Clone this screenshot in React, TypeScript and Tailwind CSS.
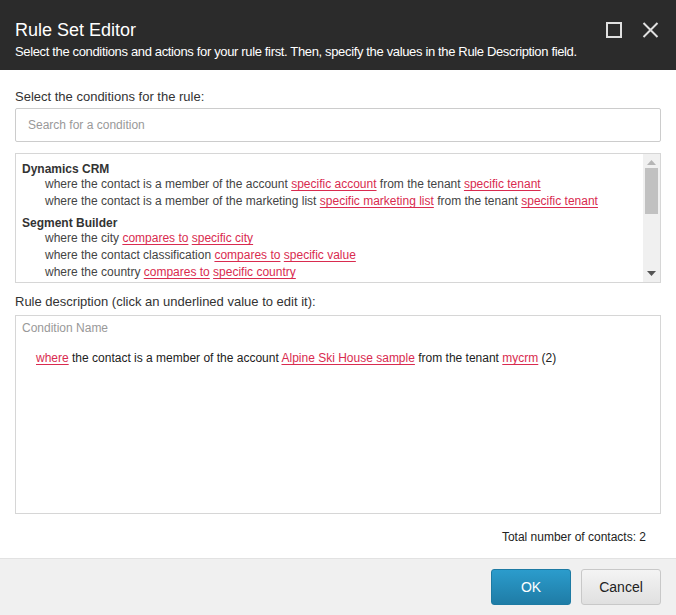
import React from 'react';

const link = 'text-[#d92b4f] underline decoration-[#d92b4f] underline-offset-2';

function L({ children }: { children: React.ReactNode }) {
  return <span className={link}>{children}</span>;
}

const groups: { name: string; items: React.ReactNode[] }[] = [
  {
    name: 'Dynamics CRM',
    items: [
      <>where the contact is a member of the account <L>specific account</L> from the tenant <L>specific tenant</L></>,
      <>where the contact is a member of the marketing list <L>specific marketing list</L> from the tenant <L>specific tenant</L></>,
    ],
  },
  {
    name: 'Segment Builder',
    items: [
      <>where the city <L>compares to</L> <L>specific city</L></>,
      <>where the contact classification <L>compares to</L> <L>specific value</L></>,
      <>where the country <L>compares to</L> <L>specific country</L></>,
    ],
  },
];

export default function App() {
  return (
    <div className="flex h-[615px] w-[676px] flex-col bg-white font-['Liberation_Sans',Arial,sans-serif] text-[#333]">
      <header className="flex h-[70px] shrink-0 items-start justify-between bg-[#2b2b2b] pl-[15px] pr-[17px] pt-[19px] text-white">
        <div>
          <h1 className="text-[18px] leading-[22px]">Rule Set Editor</h1>
          <p className="mt-[3px] text-[13px] leading-[16px] tracking-[-0.35px]">
            Select the conditions and actions for your rule first. Then, specify the values in the Rule Description field.
          </p>
        </div>
        <div className="mt-[3px] flex items-center gap-[20px] text-[#e0e0e0]">
          <svg width="16" height="16" viewBox="0 0 16 16" fill="none" stroke="currentColor" strokeWidth="2">
            <rect x="1" y="1" width="14" height="14" />
          </svg>
          <svg width="17" height="16" viewBox="0 0 17 16" fill="none" stroke="currentColor" strokeWidth="2">
            <path d="M1.5 1l14 14M15.5 1l-14 14" />
          </svg>
        </div>
      </header>

      <main className="flex flex-1 flex-col px-[15px] pt-[19px]">
        <label className="text-[13px] leading-[16px]">Select the conditions for the rule:</label>
        <div className="mt-[3px] flex h-[34px] items-center rounded-[2px] border border-[#ccc] px-[12px] text-[12px] text-[#999]">
          Search for a condition
        </div>

        <div className="mt-[11px] flex h-[130px] border border-[#d6d6d6]">
          <div className="flex-1 overflow-hidden pl-[6px] pt-[8px] text-[12px] leading-[17px] text-[#444]">
            {groups.map((g, gi) => (
              <div key={g.name} className={gi > 0 ? 'mt-[6px]' : ''}>
                <div className="font-bold leading-[14px] text-[#333]">{g.name}</div>
                {g.items.map((it, i) => (
                  <div key={i} className="whitespace-nowrap pl-[23px]">{it}</div>
                ))}
              </div>
            ))}
          </div>
          <div className="flex w-[17px] flex-col items-center bg-[#f0f0f0] py-[6px]">
            <svg width="9" height="5" viewBox="0 0 9 5"><path d="M0 5L4.5 0 9 5z" fill="#b5b5b5" /></svg>
            <div className="mt-[3px] h-[46px] w-[13px] bg-[#c1c1c1]" />
            <div className="flex-1" />
            <svg width="9" height="5" viewBox="0 0 9 5"><path d="M0 0h9L4.5 5z" fill="#555" /></svg>
          </div>
        </div>

        <label className="mt-[11px] text-[13px] leading-[16px]">Rule description (click an underlined value to edit it):</label>
        <div className="mt-[5px] h-[199px] border border-[#d6d6d6] px-[6px] pt-[4px] text-[12px]">
          <div className="text-[#999] leading-[16px]">Condition Name</div>
          <div className="mt-[14px] pl-[14px] leading-[16px] text-[#222]">
            <L>where</L> the contact is a member of the account <L>Alpine Ski House sample</L> from the tenant <L>mycrm</L> (2)
          </div>
        </div>

        <div className="mt-[16px] pr-[15px] text-right text-[12px] leading-[14px] text-[#222]">Total number of contacts: 2</div>
      </main>

      <footer className="flex h-[57px] shrink-0 items-center justify-end gap-[10px] border-t border-[#e2e2e2] bg-[#f0f0f0] pr-[15px]">
        <button className="h-[36px] w-[80px] rounded-[3px] border border-[#1d7aa3] bg-gradient-to-b from-[#2b9ccc] to-[#1f7ca6] text-[14px] text-white">
          OK
        </button>
        <button className="h-[36px] w-[80px] rounded-[3px] border border-[#c8c8c8] bg-gradient-to-b from-[#f4f4f4] to-[#e0e0e0] text-[14px] text-[#222]">
          Cancel
        </button>
      </footer>
    </div>
  );
}
